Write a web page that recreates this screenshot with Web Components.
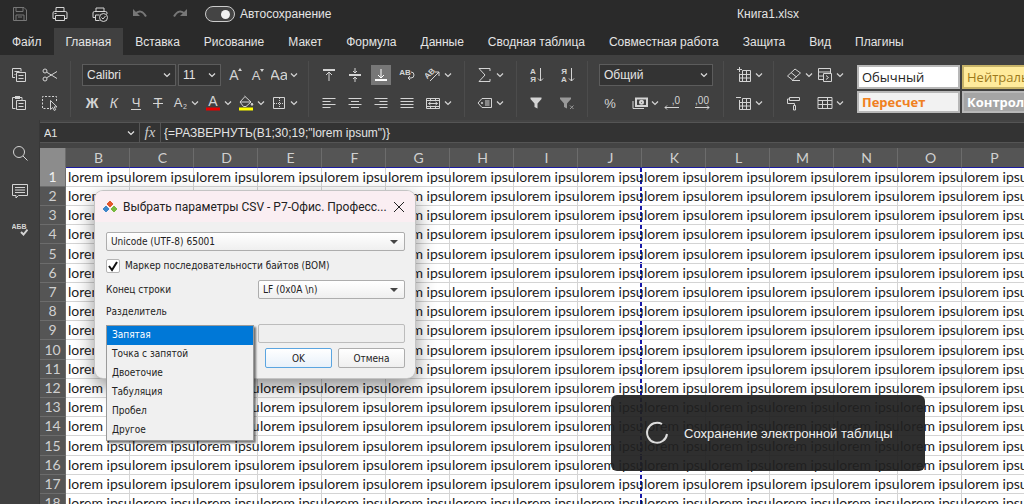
<!DOCTYPE html>
<html lang="ru">
<head>
<meta charset="utf-8">
<title>Книга1.xlsx</title>
<style>
  body { margin: 0; font-family: "Liberation Sans", sans-serif; font-size: 12px; }
</style>
</head>
<body>
<app-shell></app-shell>
<script>
const ICONS = {
  save: '<path d="M1.500 1.500h10.500l2.500 2.500v10.500h-13z M4 1.500v4h7v-4 M4 14.500v-5.500h8v5.500 M6 11h4"/>',
  print: '<path d="M4 5.500v-4h8v4 M3.500 12.500h-2.500v-5.500q0-1.500 1.500-1.500h11q1.500 0 1.500 1.500v5.500h-2.500 M3.500 9.500h9v5h-9z M2.500 7.500h2"/>',
  quick: '<path d="M4 5.500v-3.500h8v3.500 M3.500 11.500h-2.500v-4.500q0-1.500 1.500-1.500h11q1.500 0 1.500 1.500v1 M3.500 9h4 M3.500 9v5.500h4"/><circle cx="11.500" cy="11.500" r="4"/><path d="M9.500 11.500l1.500 1.500 2.500-3"/>',
  undo: '<path stroke-width="2" d="M3 8q6-6 11 2.500"/><path fill="currentColor" stroke="none" d="M1 3v7h7z"/>',
  redo: '<path stroke-width="2" d="M13 8q-6-6-11 2.500"/><path fill="currentColor" stroke="none" d="M15 3v7h-7z"/>',
  copy: '<path d="M4 10.500h-2.500v-9h8.500v3 M3.500 4.500h5 M3.500 7.500h1 M5.500 5.500h9v9h-9z M7.500 8.500h5 M7.500 11.500h5"/>',
  paste: '<path d="M4.500 13.500h-3v-11h9.500v3 M5.500 5.500h9v9h-9z M7.500 8.500h5 M7.500 11.500h5"/><path fill="currentColor" stroke="none" d="M4 1h5v3h-5z"/>',
  cut: '<circle cx="3" cy="4" r="2"/><circle cx="3" cy="12" r="2"/><path d="M4.700 5.200l10.300 6.300 M4.700 10.800l10.300-6.300"/>',
  pick: '<path stroke-dasharray="2 1.500" d="M7 13.500h-6.500v-12h14v6"/><path fill="#404040" d="M8.500 5.500v9l2.200-2 1.600 3 1.400-.8-1.500-2.800h2.800z"/>',
  bold: '<text x="8" y="13" font-size="14" font-weight="bold">Ж</text>',
  italic: '<text x="8" y="13" font-size="14" font-style="italic">К</text>',
  under: '<text x="8" y="12" font-size="13">Ч</text><path d="M3 14.500h10"/>',
  strike: '<text x="8" y="13" font-size="14">Т</text><path d="M3 8.500h10"/>',
  sub: '<text x="6" y="12" font-size="13">A</text><text x="13" y="14" font-size="7">2</text>',
  color: '<text x="8" y="11" font-size="14">A</text><path stroke="#e60000" stroke-width="3" d="M1 14h14"/>',
  fill: '<path d="M6.500 1l6.500 6-5 4.500h-2.500l-3.500-4.500 5-5.500 M2 7h11"/><path fill="currentColor" d="M14 8l1 2h-2z"/><path stroke="#ffff00" stroke-width="3" d="M1 14h14"/>',
  border: '<path d="M2.500 2.500h11v11h-11z"/><path stroke-dasharray="1 1" d="M8.500 3v10 M3 8.500h10"/>',
  grow: '<text x="7" y="13" font-size="14">A</text><path fill="currentColor" stroke="none" d="M11 4l2-3 2 3z"/>',
  shrink: '<text x="7" y="13" font-size="13">A</text><path fill="currentColor" stroke="none" d="M11 2h4l-2 3z"/>',
  case: '<text x="8" y="13" font-size="15">Aa</text>',
  top: '<path stroke-width="2" d="M2 3h12"/><path d="M8 14v-9 M5 8l3-3 3 3"/>',
  middle: '<path stroke-width="2" d="M2 8h12"/><path d="M8 1v5 M6 4l2 2 2-2 M8 15v-5 M6 12l2-2 2 2"/>',
  bottom: '<path stroke-width="2" d="M2 13h12"/><path d="M8 2v9 M5 8l3 3 3-3"/>',
  wrap: '<text x="6" y="8" font-size="8" font-weight="bold">AB</text><path d="M12 5q3 0 3 3t-3 3h-3 M11 9l-2 2 2 2"/>',
  orient: '<text x="5" y="9" font-size="8" font-weight="bold" transform="rotate(-45 5 7)">AB</text><path d="M5 14l9-9 M10 5h4v4"/>',
  left: '<path d="M1.500 3.500h13 M1.500 6.500h8 M1.500 9.500h13 M1.500 12.500h8"/>',
  center: '<path d="M1.500 3.500h13 M4 6.500h8 M1.500 9.500h13 M4 12.500h8"/>',
  right: '<path d="M1.500 3.500h13 M6.500 6.500h8 M1.500 9.500h13 M6.500 12.500h8"/>',
  justify: '<path d="M1.500 3.500h13 M1.500 6.500h13 M1.500 9.500h13 M1.500 12.500h13"/>',
  merge: '<path d="M1.500 3.500h13v10h-13z M1.500 5.500h13 M1.500 11.500h13 M5.500 3.500v2 M10.500 3.500v2 M5.500 11.500v2 M10.500 11.500v2 M3.500 8.500h9 M5.500 7l-2 1.500 2 1.500 M10.500 7l2 1.500-2 1.500"/>',
  sum: '<path d="M13 4v-2.500h-11l6 6.500-6 6.500h11v-2.500"/>',
  named: '<path d="M5 3.500h9.500v9h-9.500l-4-4.500z M8 6h4.500 M8 8h4.500 M8 10h4.500"/><circle cx="5" cy="8" r=".7"/>',
  asc: '<text x="5" y="7" font-size="8" font-weight="bold">А</text><text x="5" y="15" font-size="8" font-weight="bold">Я</text><path d="M12.500 1v13 M10 11.500l2.500 2.500 2.500-2.500"/>',
  desc: '<text x="5" y="7" font-size="8" font-weight="bold">Я</text><text x="5" y="15" font-size="8" font-weight="bold">А</text><path d="M12.500 1v13 M10 11.500l2.500 2.500 2.500-2.500"/>',
  funnel: '<path fill="currentColor" stroke="none" d="M2.500 2.500h11v1.500l-4 4.500v5l-3-1.500v-3.500l-4-4.500z"/>',
  unfunnel: '<g opacity=".6"><path fill="currentColor" stroke="none" d="M1 2.500h11v1.500l-4 4.500v5l-3-1.500v-3.500l-4-4.500z"/><path d="M11 10.500l3.500 3.500 M14.500 10.500l-3.500 3.500"/></g>',
  percent: '<text x="8" y="13" font-size="13">%</text>',
  money: '<path d="M1 6v7.500h11"/><path stroke-width="2" d="M4 3.500h11v7.500h-11z"/><circle cx="9.500" cy="7.200" r="1.500" stroke-width="2"/>',
  decdown: '<text x="12" y="9" font-size="10">,0</text><path d="M15 12.500h-14 M3 10.500l-2 2 2 2"/>',
  decup: '<text x="8" y="9" font-size="10">,00</text><path d="M1 12.500h14 M13 10.500l2 2-2 2"/>',
  insert: '<path d="M3.500 6.500v8h11v-11h-8 M6.500 3.500v11 M10.500 3.500v11 M3.500 7.500h11 M3.500 11h11 M1 2.500h5 M3.500 0v5"/>',
  remove: '<path d="M3.500 5v9.500h11v-11h-8 M6.500 3.500v11 M10.500 3.500v11 M3.500 7.500h11 M3.500 11h11 M0 2.500h5"/>',
  eraser: '<path d="M6 12.500l-4.500-3.500 7.500-7 5.500 4-8 7z M5 5.500l5.500 4.500 M6 13.500h8"/>',
  cond: '<path d="M6 12.500h-4.500v-11h12v4.500 M1.500 5h12 M1.500 9h5 M6.500 6.500h8v8h-8z M9 8.500l2.500 2-2.500 2"/>',
  painter: '<path d="M3.500 2.500h10v3h-10z M3.500 4h-2v4.500h7v2 M7.500 10.500h2v4.500h-2z"/>',
  table: '<path d="M1 2.500h14v11h-14z M1 5.500h14 M1 9.500h14 M5.500 5.500v8 M10.500 2.500v11"/>',
  search: '<circle cx="7" cy="7" r="5.500"/><path d="M11 11l4.500 4.500"/>',
  comment: '<path d="M.500 1.500h15v11h-9l-2.500 2.500v-2.500h-3.500z M3 4.500h10 M3 7h10 M3 9.500h10"/>',
  spell: '<text x="7" y="8" font-size="7" font-weight="bold">АБВ</text><path stroke-width="2" d="M9 11l2.500 2.500 4-5"/>',
  chevron: '<path stroke-width="1.200" d="M5 6.500l3 3 3-3"/>',
};
const icon = (name, size = 16) =>
  `<svg width="${size}" height="${size}" viewBox="0 0 16 16" aria-hidden="true" fill="none" stroke="currentColor">${ICONS[name]}</svg>`;

const BASE = `
  *, *::before { box-sizing: border-box; }
  :host { display: block; box-sizing: border-box; }
  svg { display: block; flex: none; }
  svg text { fill: currentColor; stroke: none; text-anchor: middle; font-family: "Liberation Sans", sans-serif; }
  button { border: 0; padding: 0; background: none; color: inherit; font: inherit; }
`;
const define = (name, css, html) => customElements.define(name, class extends HTMLElement {
  constructor() {
    super();
    this.attachShadow({ mode: 'open' }).innerHTML =
      `<style>${BASE}${css}</style>` + (typeof html === 'function' ? '' : html);
    this.filled = false;
  }
  connectedCallback() {
    if (this.filled || typeof html !== 'function') return;
    this.filled = true;
    this.shadowRoot.innerHTML += html(this);
  }
});

/* Icon button, with an arrow when it opens a menu */
define('tool-button', `
  :host { display: inline-block; }
  button { display: flex; align-items: center; height: 16px; color: #d4d4d4; }
  button[aria-pressed] { background: #777; box-shadow: 0 0 0 2px #777; color: #fff; }
  svg + svg { margin: 0 -4px 0 -1px; }
  :host([dim]) button { color: #777; }
`, el => `<button type="button" aria-label="${el.getAttribute('label')}" ${el.hasAttribute('active') ? 'aria-pressed="true"' : ''}>${icon(el.getAttribute('icon'))}${el.hasAttribute('menu') ? icon('chevron') : ''}</button>`);

/* Drop-down of the ribbon */
define('tool-select', `
  :host { display: grid; height: 22px; }
  select { grid-area: 1 / 1; width: 100%; appearance: none; border: 1px solid #5c5c5c; border-radius: 0; background: #333; color: #e4e4e4;
    font: inherit; padding: 0 4px; }
  svg { grid-area: 1 / 1; place-self: center end; margin-right: 1px; color: #dcdcdc; pointer-events: none; }
`, el => `<select aria-label="${el.getAttribute('label')}"><option>${el.getAttribute('value')}</option></select>${icon('chevron')}`);

define('tool-group', `
  :host { display: grid; grid-template-rows: 28px 28px; height: 56px; padding: 0 12px; border-right: 1px solid #4c4c4c; }
  :host([tight]) { padding-right: 10px; }
  :host([start]) { padding-left: 11px; }
  :host([last]) { padding-right: 0; border: 0; }
  ::slotted(*) { display: flex; align-items: center; }
`, '<slot></slot>');

define('title-bar', `
  :host { display: grid; grid-template-columns: 1fr 1fr; align-items: center; height: 28px; background: #2a2a2a; color: #e4e4e4; }
  .left { display: flex; align-items: center; padding-left: 12px; }
  .quick { display: flex; gap: 24px; }
  label { display: flex; align-items: center; gap: 5px; margin-left: 17px; }
  input { appearance: none; margin: 0; width: 30px; height: 16px; border: 1px solid #ccc; border-radius: 8px; background: #444; display: flex; justify-content: flex-end; align-items: center; padding: 0 4px; }
  input::before { content: ""; width: 9px; height: 9px; border-radius: 50%; background: #f2f2f2; }
  .name { text-align: center; }
`, `<div class="left"><div class="quick">
    <tool-button icon="save" label="Сохранить" dim></tool-button>
    <tool-button icon="print" label="Печать"></tool-button>
    <tool-button icon="quick" label="Быстрая печать"></tool-button>
    <tool-button icon="undo" label="Отменить" dim></tool-button>
    <tool-button icon="redo" label="Повторить" dim></tool-button>
  </div>
  <label><input type="checkbox" role="switch" checked>Автосохранение</label></div>
  <div class="name">Книга1.xlsx</div>`);

define('ribbon-tabs', `
  nav { display: flex; height: 27px; background: #2a2a2a; }
  a { display: flex; align-items: center; padding: 0 12px; color: #e4e4e4; text-decoration: none; white-space: nowrap; }
  a[aria-current] { background: #404040; }
`, '<nav>' + ['Файл', 'Главная', 'Вставка', 'Рисование', 'Макет', 'Формула', 'Данные', 'Сводная таблица', 'Совместная работа', 'Защита', 'Вид', 'Плагины']
  .map((t, i) => `<a href="#"${i === 1 ? ' aria-current="page"' : ''}>${t}</a>`).join('') + '</nav>');

/* Gallery of cell styles */
define('style-gallery', `
  :host { flex: 1; min-width: 0; overflow: hidden; padding: 4px 0 0 13px; }
  div { display: grid; grid-template-columns: 103px 103px; grid-auto-rows: 24px; gap: 2px; }
  button { border: 2px solid #b8b8b8; padding: 0 3px; text-align: left; font: 13px "Open Sans", sans-serif; white-space: nowrap; }
  .normal { background: #fff; color: #222; }
  .neutral { background: #ffeb9c; color: #9c7a1c; border-color: #c7b368; }
  .calc { background: #f2f2f2; color: #f08020; font-weight: bold; }
  .check { background: #a5a5a5; color: #fff; font-weight: bold; }
  .calc, .check { height: 22px; }
`, `<div><button class="normal">Обычный</button><button class="neutral">Нейтральный</button>
  <button class="calc">Пересчет</button><button class="check">Контрольная</button></div>`);

const B = (i, label, extra = '') => `<tool-button icon="${i}" label="${label}" ${extra}></tool-button>`;
define('ribbon-bar', `
  :host { display: flex; height: 65px; padding-top: 6px; background: #404040; overflow: hidden; }
  tool-group, style-gallery { flex-shrink: 0; }
  style-gallery { flex-shrink: 1; }
  .g6 { gap: 6px; } .g10 { gap: 10px; } .g15 { gap: 15px; } .g4 { gap: 4px; }
  .indent { padding-left: 2px; }
  .face { width: 94px; margin-right: -4px; }
  .size { width: 43px; }
  .format { width: 114px; }
  .numbers { display: grid; grid-template-columns: 30px 32px 30px auto; padding-left: 3px; }
`, `
  <tool-group start><div class="g15">${B('copy', 'Копировать')}${B('cut', 'Вырезать')}</div><div class="g15">${B('paste', 'Вставить')}${B('pick', 'Выделить')}</div></tool-group>
  <tool-group start tight>
    <div class="g6"><tool-select class="face" label="Шрифт" value="Calibri"></tool-select><tool-select class="size" label="Размер" value="11"></tool-select>${B('grow', 'Увеличить')}${B('shrink', 'Уменьшить')}${B('case', 'Регистр', 'menu')}</div>
    <div class="g6 indent">${B('bold', 'Полужирный')}${B('italic', 'Курсив')}${B('under', 'Подчеркнутый')}${B('strike', 'Зачеркнутый')}${B('sub', 'Подстрочный', 'menu')}${B('color', 'Цвет шрифта', 'menu')}${B('fill', 'Заливка', 'menu')}${B('border', 'Границы', 'menu')}</div>
  </tool-group>
  <tool-group>
    <div class="g10">${B('top', 'По верхнему краю')}${B('middle', 'По середине')}${B('bottom', 'По нижнему краю', 'active')}${B('wrap', 'Перенос текста')}${B('orient', 'Ориентация', 'menu')}</div>
    <div class="g10">${B('left', 'По левому краю')}${B('center', 'По центру')}${B('right', 'По правому краю')}${B('justify', 'По ширине')}${B('merge', 'Объединить', 'menu')}</div>
  </tool-group>
  <tool-group><div>${B('sum', 'Сумма', 'menu')}</div><div>${B('named', 'Именованные диапазоны', 'menu')}</div></tool-group>
  <tool-group start><div class="g15">${B('asc', 'По возрастанию')}${B('desc', 'По убыванию')}</div><div class="g15">${B('funnel', 'Фильтр')}${B('unfunnel', 'Очистить фильтр')}</div></tool-group>
  <tool-group start tight>
    <div><tool-select class="format" label="Формат" value="Общий"></tool-select></div>
    <div class="numbers">${B('percent', 'Проценты')}${B('money', 'Денежный', 'menu')}${B('decdown', 'Уменьшить разрядность')}${B('decup', 'Увеличить разрядность')}</div>
  </tool-group>
  <tool-group tight><div>${B('insert', 'Вставить ячейки', 'menu')}</div><div>${B('remove', 'Удалить ячейки', 'menu')}</div></tool-group>
  <tool-group last>
    <div class="g4">${B('eraser', 'Очистить', 'menu')}${B('cond', 'Условное форматирование', 'menu')}</div>
    <div class="g15">${B('painter', 'Формат по образцу')}${B('table', 'Таблица', 'menu')}</div>
  </tool-group>
  <style-gallery></style-gallery>`);

define('side-rail', `
  :host { width: 40px; background: #404040; border-right: 1px solid #383838; padding-top: 25px; }
  div { display: flex; flex-direction: column; align-items: center; gap: 22px; }
`, `<div>${B('search', 'Поиск')}${B('comment', 'Комментарии')}${B('spell', 'Орфография')}</div>`);

define('formula-bar', `
  :host { display: grid; grid-template-columns: 99px 22px 1fr; height: 28px; padding: 2px 0 5px; background: #444; color: #e4e4e4; }
  div { display: flex; align-items: center; background: #333; border: solid #555; border-width: 1px 0; }
  input { width: 100%; min-width: 0; border: 0; background: none; color: inherit; padding: 0 0 0 3px; font-family: inherit; font-size: 12px; }
  .cell input { font-size: 11px; padding-left: 4px; }
  .fx { justify-content: center; border-width: 1px; color: #ccc; font: italic 15px "Liberation Serif", serif; }
`, `<div class="cell"><input aria-label="Имя ячейки" value="A1">${icon('chevron')}</div><div class="fx">fx</div>
  <div><input class="formula" aria-label="Формула" value='{=РАЗВЕРНУТЬ(B1;30;19;"lorem ipsum")}'></div>`);

define('sheet-grid', `
  :host { flex: 1; min-height: 0; overflow: hidden; background: #fff; }
  table { width: max-content; border-collapse: separate; border-spacing: 0; table-layout: fixed; font: 14px/18px Lato, sans-serif; color: #1c1c1c; }
  th { width: 26px; padding: 0; font-weight: normal; color: #d0d0d0; background: #555; border: solid #6c6c6c; border-width: 0 1px 1px 0; text-align: center; }
  thead th { width: 64px; height: 20px; padding-left: 2px; border-bottom-color: #1c1ca0; }
  thead th:first-child { width: 26px; background: #8c8c8c; border-bottom-color: #8c8c8c; }
  tbody tr:first-child th { background: #8c8c8c; color: #f0f0f0; }
  td { width: 64px; height: 19px; padding: 0 0 0 2px; border: solid #d4d4d4; border-width: 0 1px 1px 0; white-space: nowrap; }
  td span { display: block; width: 61px; height: 18px; }
  tbody tr:nth-child(5n) > * { height: 20px; }
  /* Page break after this column */
  td:nth-child(10) { border-right: 0; background: repeating-linear-gradient(#1818a8 0 4px, transparent 4px 6px) right / 2px 100% no-repeat; }
`, () => `<table><thead><tr><th></th>${[...'BCDEFGHIJKLMNOP'].map(c => `<th scope="col">${c}</th>`).join('')}</tr></thead><tbody>${
  Array.from({ length: 18 }, (_, r) => `<tr><th scope="row">${r + 1}</th>${'<td><span>lorem ipsu</span></td>'.repeat(15)}</tr>`).join('')}</tbody></table>`);

/* Drop-down of the dialog */
define('form-select', `
  :host { display: grid; height: 19px; }
  select { grid-area: 1 / 1; appearance: none; width: 100%; border: 1px solid #adadad; border-radius: 2px; background: linear-gradient(#fff, #efefef); color: #222; font: inherit; padding: 0 4px; }
  i { grid-area: 1 / 1; place-self: center end; margin-right: 7px; border: 4px solid transparent; border-top-color: #444; border-bottom: 0; pointer-events: none; }
`, el => `<select aria-label="${el.getAttribute('label')}"><option>${el.getAttribute('value')}</option></select><i></i>`);

define('csv-dialog', `
  :host { position: absolute; left: 95px; top: 191px; width: 320px; border-radius: 8px; background: #f0f0f0; color: #222;
    font: 10px "DejaVu Sans Condensed", "DejaVu Sans", sans-serif; box-shadow: 0 0 0 1px #c4c4c4, 0 8px 20px #0007; }
  header { display: flex; align-items: center; gap: 5px; height: 31px; padding: 0 10px 0 7px; background: #faeef2; border-radius: 8px 8px 0 0; }
  h1 { flex: 1; margin: 0; font: 12px Roboto, sans-serif; white-space: nowrap; }
  form { position: relative; display: grid; grid-template-columns: 147px 1fr; gap: 5px; padding: 10px 10px 10px 11px; align-items: center; }
  .wide { grid-column: 1 / 3; }
  .check { display: flex; align-items: center; gap: 5px; height: 19px; }
  .box { display: grid; }
  .box > * { grid-area: 1 / 1; }
  .box input { appearance: none; width: 14px; height: 14px; margin: 0; border: 1px solid #b4b4b4; border-radius: 2px; background: #fff; }
  .box svg { pointer-events: none; }
  .list { height: 15px; line-height: 15px; }
  .custom { grid-column: 2; width: 100%; height: 19px; border: 1px solid #bcbcbc; border-radius: 2px; background: #efefef; }
  .actions { grid-column: 2; display: flex; gap: 6px; height: 20px; padding-left: 7px; }
  .actions button { flex: 1; border: 1px solid #adadad; border-radius: 2px; background: linear-gradient(#fff, #efefef); }
  .actions .ok { border-color: #5ba5e0; background: linear-gradient(#fff, #e8f1fa); }
  .options { position: absolute; left: 11px; top: 103px; width: 148px; height: 116px; border: 1px solid #9a9a9a; border-radius: 0; padding: 0;
    background: #f0f0f0; box-shadow: 2px 2px 2px #0008; font: inherit; color: #222; outline: 0; overflow: hidden; }
  .options option { height: 19px; min-height: 19px; padding: 3px 5px 0; }
  .options option:checked { background: #0078d7 linear-gradient(#0078d7, #0078d7); color: #fff; }
`, `<header>
    <svg width="16" height="16" viewBox="0 0 16 16" aria-hidden="true"><path fill="#3f88c9" stroke="#3f88c9" stroke-linejoin="round" d="M4 7l3 3-3 3-3-3z"/><path fill="#78b93f" stroke="#78b93f" stroke-linejoin="round" d="M12 7l3 3-3 3-3-3z"/><path fill="#e2572b" stroke="#e2572b" stroke-linejoin="round" d="M8 2l3 3-3 3-3-3z"/></svg>
    <h1>Выбрать параметры CSV - P7-Офис. Професс...</h1>
    <button type="button" aria-label="Закрыть"><svg width="12" height="12" viewBox="0 0 12 12" stroke="#222"><path d="M1 1l10 10 M11 1l-10 10"/></svg></button>
  </header>
  <form>
    <form-select class="wide" label="Кодировка" value="Unicode (UTF-8) 65001"></form-select>
    <label class="check wide"><span class="box"><input type="checkbox" checked><svg width="14" height="14" viewBox="0 0 14 14" fill="none" stroke="#111" stroke-width="2"><path d="M3 7l3 4 5-8"/></svg></span>Маркер последовательности байтов (BOM)</label>
    <span>Конец строки</span><form-select label="Конец строки" value="LF (0x0A \\n)"></form-select>
    <label class="list wide" for="sep">Разделитель</label>
    <input class="custom" aria-label="Другой разделитель" disabled>
    <div class="actions"><button type="button" class="ok">OK</button><button type="button">Отмена</button></div>
    <select class="options" id="sep" size="6"><option selected>Запятая</option><option>Точка с запятой</option><option>Двоеточие</option><option>Табуляция</option><option>Пробел</option><option>Другое</option></select>
  </form>`);

define('save-toast', `
  :host { position: absolute; right: 99px; bottom: 33px; display: flex; align-items: center; gap: 15px; width: 314px; height: 76px; padding-left: 34px;
    border-radius: 6px; background: #202020ee; color: #f0f0f0; font-size: 13px; white-space: nowrap; }
`, `<svg width="24" height="24" viewBox="0 0 24 24" fill="none" stroke="#ddd" stroke-width="2" aria-hidden="true"><path d="M22 13a10 10 0 1 1-5-10"/></svg><span role="status">Сохранение электронной таблицы</span>`);

define('app-shell', `
  :host { position: relative; display: flex; flex-direction: column; height: 100vh; overflow: hidden; background: #404040; }
  .work { display: flex; flex: 1; min-height: 0; }
  main { display: flex; flex-direction: column; flex: 1; min-width: 0; }
`, `<title-bar></title-bar><ribbon-tabs></ribbon-tabs><ribbon-bar></ribbon-bar>
  <div class="work"><side-rail></side-rail><main><formula-bar></formula-bar><sheet-grid></sheet-grid></main></div>
  <csv-dialog></csv-dialog><save-toast></save-toast>`);
</script>
</body>
</html>
